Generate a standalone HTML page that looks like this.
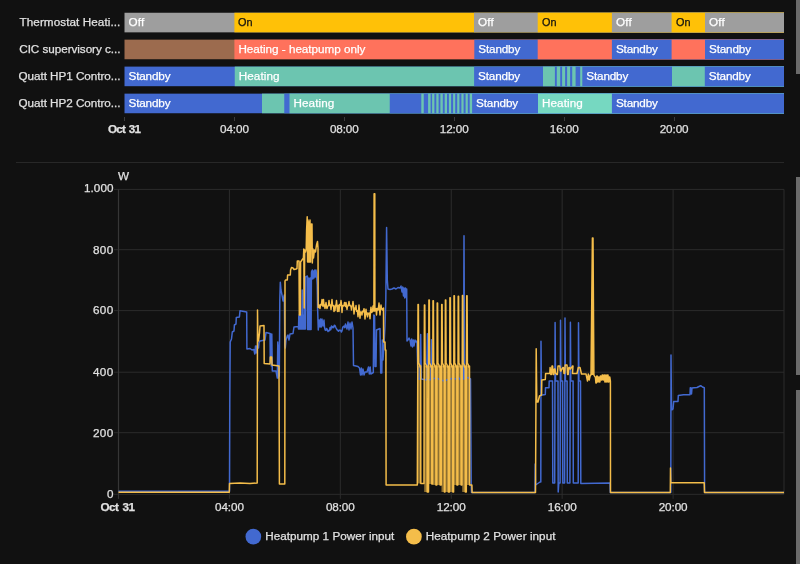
<!DOCTYPE html>
<html lang="en"><head><meta charset="utf-8"><title>History</title>
<style>
html,body{margin:0;padding:0;background:#111111;}
body{width:800px;height:564px;position:relative;overflow:hidden;font-family:"Liberation Sans",sans-serif;font-size:11.7px;color:#e1e1e1;-webkit-text-stroke:0.25px;}
#root{position:absolute;left:0;top:0;width:800px;height:564px;overflow:hidden;will-change:transform;-webkit-font-smoothing:antialiased;}
.abs{position:absolute;white-space:nowrap;}
.seg{position:absolute;overflow:hidden;white-space:nowrap;}
.sl{position:absolute;white-space:nowrap;line-height:20.6px;}
.name{position:absolute;right:679.6px;text-align:right;white-space:nowrap;}
.tl{position:absolute;white-space:nowrap;transform:translateX(-50%);line-height:14px;}
.yl{position:absolute;white-space:nowrap;right:686.4px;line-height:14px;}
.sb{position:absolute;left:796px;width:4px;background:#6b6b6b;}
svg{position:absolute;left:0;top:0;}
</style></head><body><div id="root">

<svg width="800" height="130" viewBox="0 0 800 130">
<rect x="124.50" y="12.75" width="659.50" height="19.60" fill="#9e9e9e"/>
<rect x="234.40" y="12.75" width="549.60" height="19.60" fill="#ffc107"/>
<rect x="474.00" y="12.75" width="310.00" height="19.60" fill="#9e9e9e"/>
<rect x="537.70" y="12.75" width="246.30" height="19.60" fill="#ffc107"/>
<rect x="611.90" y="12.75" width="172.10" height="19.60" fill="#9e9e9e"/>
<rect x="671.60" y="12.75" width="112.40" height="19.60" fill="#ffc107"/>
<rect x="705.00" y="12.75" width="79.00" height="19.60" fill="#9e9e9e"/>
<rect x="124.50" y="39.65" width="659.50" height="19.60" fill="#9c6b4e"/>
<rect x="234.40" y="39.65" width="549.60" height="19.60" fill="#ff725c"/>
<rect x="474.30" y="39.65" width="309.70" height="19.60" fill="#4269d0"/>
<rect x="537.70" y="39.65" width="246.30" height="19.60" fill="#ff725c"/>
<rect x="611.90" y="39.65" width="172.10" height="19.60" fill="#4269d0"/>
<rect x="671.60" y="39.65" width="112.40" height="19.60" fill="#ff725c"/>
<rect x="705.00" y="39.65" width="79.00" height="19.60" fill="#4269d0"/>
<rect x="124.50" y="66.60" width="659.50" height="19.60" fill="#4269d0"/>
<rect x="234.75" y="66.60" width="549.25" height="19.60" fill="#6cc5b0"/>
<rect x="474.10" y="66.60" width="309.90" height="19.60" fill="#4269d0"/>
<rect x="543.00" y="66.60" width="241.00" height="19.60" fill="#6cc5b0"/>
<rect x="554.90" y="66.60" width="229.10" height="19.60" fill="#4269d0"/>
<rect x="556.80" y="66.60" width="227.20" height="19.60" fill="#6cc5b0"/>
<rect x="560.20" y="66.60" width="223.80" height="19.60" fill="#4269d0"/>
<rect x="562.10" y="66.60" width="221.90" height="19.60" fill="#6cc5b0"/>
<rect x="565.10" y="66.60" width="218.90" height="19.60" fill="#4269d0"/>
<rect x="567.10" y="66.60" width="216.90" height="19.60" fill="#6cc5b0"/>
<rect x="570.10" y="66.60" width="213.90" height="19.60" fill="#4269d0"/>
<rect x="572.20" y="66.60" width="211.80" height="19.60" fill="#6cc5b0"/>
<rect x="575.60" y="66.60" width="208.40" height="19.60" fill="#4269d0"/>
<rect x="580.20" y="66.60" width="203.80" height="19.60" fill="#6cc5b0"/>
<rect x="582.30" y="66.60" width="201.70" height="19.60" fill="#4269d0"/>
<rect x="672.00" y="66.60" width="112.00" height="19.60" fill="#6cc5b0"/>
<rect x="704.80" y="66.60" width="79.20" height="19.60" fill="#4269d0"/>
<rect x="124.50" y="93.65" width="659.50" height="19.60" fill="#4269d0"/>
<rect x="262.00" y="93.65" width="522.00" height="19.60" fill="#6cc5b0"/>
<rect x="284.25" y="93.65" width="499.75" height="19.60" fill="#4269d0"/>
<rect x="289.50" y="93.65" width="494.50" height="19.60" fill="#6cc5b0"/>
<rect x="389.75" y="93.65" width="394.25" height="19.60" fill="#4269d0"/>
<rect x="421.30" y="93.65" width="362.70" height="19.60" fill="#6cc5b0"/>
<rect x="423.75" y="93.65" width="360.25" height="19.60" fill="#4269d0"/>
<rect x="428.10" y="93.65" width="355.90" height="19.60" fill="#6cc5b0"/>
<rect x="430.60" y="93.65" width="353.40" height="19.60" fill="#4269d0"/>
<rect x="432.10" y="93.65" width="351.90" height="19.60" fill="#6cc5b0"/>
<rect x="434.40" y="93.65" width="349.60" height="19.60" fill="#4269d0"/>
<rect x="436.30" y="93.65" width="347.70" height="19.60" fill="#6cc5b0"/>
<rect x="438.60" y="93.65" width="345.40" height="19.60" fill="#4269d0"/>
<rect x="440.40" y="93.65" width="343.60" height="19.60" fill="#6cc5b0"/>
<rect x="442.80" y="93.65" width="341.20" height="19.60" fill="#4269d0"/>
<rect x="444.70" y="93.65" width="339.30" height="19.60" fill="#6cc5b0"/>
<rect x="447.00" y="93.65" width="337.00" height="19.60" fill="#4269d0"/>
<rect x="448.90" y="93.65" width="335.10" height="19.60" fill="#6cc5b0"/>
<rect x="451.10" y="93.65" width="332.90" height="19.60" fill="#4269d0"/>
<rect x="453.10" y="93.65" width="330.90" height="19.60" fill="#6cc5b0"/>
<rect x="455.20" y="93.65" width="328.80" height="19.60" fill="#4269d0"/>
<rect x="457.20" y="93.65" width="326.80" height="19.60" fill="#6cc5b0"/>
<rect x="459.40" y="93.65" width="324.60" height="19.60" fill="#4269d0"/>
<rect x="461.40" y="93.65" width="322.60" height="19.60" fill="#6cc5b0"/>
<rect x="463.60" y="93.65" width="320.40" height="19.60" fill="#4269d0"/>
<rect x="465.60" y="93.65" width="318.40" height="19.60" fill="#6cc5b0"/>
<rect x="467.80" y="93.65" width="316.20" height="19.60" fill="#4269d0"/>
<rect x="469.70" y="93.65" width="314.30" height="19.60" fill="#6cc5b0"/>
<rect x="472.10" y="93.65" width="311.90" height="19.60" fill="#4269d0"/>
<rect x="538.00" y="93.65" width="246.00" height="19.60" fill="#76d8c1"/>
<rect x="611.90" y="93.65" width="172.10" height="19.60" fill="#4269d0"/>
</svg>
<div id="t0" class="name" style="letter-spacing:0.078px;top:11.8px;line-height:20.6px">Thermostat Heati...</div>
<span id="t1" class="sl" style="letter-spacing:0.213px;left:128.50px;top:11.85px;color:#ffffff;">Off</span>
<span class="sl" style="left:238.40px;top:11.85px;color:#111111;transform:scaleX(0.93);transform-origin:0 50%">On</span>
<span id="t2" class="sl" style="letter-spacing:0.213px;left:478.00px;top:11.85px;color:#ffffff;">Off</span>
<span class="sl" style="left:541.70px;top:11.85px;color:#111111;transform:scaleX(0.93);transform-origin:0 50%">On</span>
<span id="t3" class="sl" style="letter-spacing:0.213px;left:615.90px;top:11.85px;color:#ffffff;">Off</span>
<span class="sl" style="left:675.60px;top:11.85px;color:#111111;transform:scaleX(0.93);transform-origin:0 50%">On</span>
<span id="t4" class="sl" style="letter-spacing:0.213px;left:709.00px;top:11.85px;color:#ffffff;">Off</span>
<div id="t5" class="name" style="letter-spacing:-0.040px;top:38.6px;line-height:20.6px">CIC supervisory c...</div>
<span id="t6" class="sl" style="letter-spacing:-0.016px;left:238.40px;top:38.75px;color:#ffffff;">Heating - heatpump only</span>
<span id="t7" class="sl" style="letter-spacing:-0.148px;left:478.30px;top:38.75px;color:#ffffff;">Standby</span>
<span id="t8" class="sl" style="letter-spacing:-0.148px;left:615.90px;top:38.75px;color:#ffffff;">Standby</span>
<span id="t9" class="sl" style="letter-spacing:-0.148px;left:709.00px;top:38.75px;color:#ffffff;">Standby</span>
<div id="t10" class="name" style="letter-spacing:-0.036px;top:65.6px;line-height:20.6px">Quatt HP1 Contro...</div>
<span id="t11" class="sl" style="letter-spacing:-0.148px;left:128.50px;top:65.70px;color:#ffffff;">Standby</span>
<span id="t12" class="sl" style="letter-spacing:0.084px;left:238.75px;top:65.70px;color:#ffffff;">Heating</span>
<span id="t13" class="sl" style="letter-spacing:-0.148px;left:478.10px;top:65.70px;color:#ffffff;">Standby</span>
<span id="t14" class="sl" style="letter-spacing:-0.148px;left:586.30px;top:65.70px;color:#ffffff;">Standby</span>
<span id="t15" class="sl" style="letter-spacing:-0.148px;left:708.80px;top:65.70px;color:#ffffff;">Standby</span>
<div id="t16" class="name" style="letter-spacing:-0.036px;top:92.7px;line-height:20.6px">Quatt HP2 Contro...</div>
<span id="t17" class="sl" style="letter-spacing:-0.148px;left:128.50px;top:92.75px;color:#ffffff;">Standby</span>
<span id="t18" class="sl" style="letter-spacing:0.084px;left:293.50px;top:92.75px;color:#ffffff;">Heating</span>
<span id="t19" class="sl" style="letter-spacing:-0.148px;left:476.10px;top:92.75px;color:#ffffff;">Standby</span>
<span id="t20" class="sl" style="letter-spacing:0.084px;left:542.00px;top:92.75px;color:#ffffff;">Heating</span>
<span id="t21" class="sl" style="letter-spacing:-0.148px;left:615.90px;top:92.75px;color:#ffffff;">Standby</span>
<div class="abs" style="left:124.0px;top:117px;width:1px;height:4px;background:#3c3c3c"></div>
<div id="t22" class="tl" style="letter-spacing:-0.787px;left:124.0px;top:122.1px;font-weight:bold;word-spacing:1.2px;">Oct 31</div>
<div class="abs" style="left:233.9px;top:117px;width:1px;height:4px;background:#3c3c3c"></div>
<div id="t23" class="tl" style="letter-spacing:-0.088px;left:234.4px;top:122.1px;">04:00</div>
<div class="abs" style="left:343.8px;top:117px;width:1px;height:4px;background:#3c3c3c"></div>
<div id="t24" class="tl" style="letter-spacing:-0.088px;left:344.3px;top:122.1px;">08:00</div>
<div class="abs" style="left:453.8px;top:117px;width:1px;height:4px;background:#3c3c3c"></div>
<div id="t25" class="tl" style="letter-spacing:-0.088px;left:454.2px;top:122.1px;">12:00</div>
<div class="abs" style="left:563.7px;top:117px;width:1px;height:4px;background:#3c3c3c"></div>
<div id="t26" class="tl" style="letter-spacing:-0.088px;left:564.2px;top:122.1px;">16:00</div>
<div class="abs" style="left:673.6px;top:117px;width:1px;height:4px;background:#3c3c3c"></div>
<div id="t27" class="tl" style="letter-spacing:-0.088px;left:674.1px;top:122.1px;">20:00</div>
<div class="abs" style="left:16px;top:161.7px;width:768px;height:1.6px;background:#282828"></div>
<div class="sb" style="top:0.0px;height:74.0px"></div>
<div class="sb" style="top:177.0px;height:197.5px"></div>
<div class="sb" style="top:389.6px;height:174.4px"></div>
<svg width="800" height="564" viewBox="0 0 800 564">
<line x1="114.0" y1="494.30" x2="784.0" y2="494.30" stroke="#2c2c2c" stroke-width="1"/>
<line x1="114.0" y1="432.70" x2="784.0" y2="432.70" stroke="#2c2c2c" stroke-width="1"/>
<line x1="114.0" y1="372.20" x2="784.0" y2="372.20" stroke="#2c2c2c" stroke-width="1"/>
<line x1="114.0" y1="310.60" x2="784.0" y2="310.60" stroke="#2c2c2c" stroke-width="1"/>
<line x1="114.0" y1="249.70" x2="784.0" y2="249.70" stroke="#2c2c2c" stroke-width="1"/>
<line x1="114.0" y1="189.40" x2="784.0" y2="189.40" stroke="#2c2c2c" stroke-width="1"/>
<line x1="118.50" y1="189.40" x2="118.50" y2="498.80" stroke="#2c2c2c" stroke-width="1"/>
<line x1="229.42" y1="189.40" x2="229.42" y2="498.80" stroke="#2c2c2c" stroke-width="1"/>
<line x1="340.33" y1="189.40" x2="340.33" y2="498.80" stroke="#2c2c2c" stroke-width="1"/>
<line x1="451.25" y1="189.40" x2="451.25" y2="498.80" stroke="#2c2c2c" stroke-width="1"/>
<line x1="562.17" y1="189.40" x2="562.17" y2="498.80" stroke="#2c2c2c" stroke-width="1"/>
<line x1="673.08" y1="189.40" x2="673.08" y2="498.80" stroke="#2c2c2c" stroke-width="1"/>
<line x1="784.00" y1="189.40" x2="784.00" y2="494.30" stroke="#2c2c2c" stroke-width="1"/>
<line x1="118.50" y1="189.40" x2="118.50" y2="498.80" stroke="#363636" stroke-width="1.2"/>
<rect x="417.8" y="366.0" width="3.0" height="117.5" fill="#f4bd4a" opacity="0.55"/>
<rect x="424.2" y="366.0" width="3.0" height="126.0" fill="#f4bd4a" opacity="0.55"/>
<rect x="428.7" y="366.0" width="3.1" height="118.0" fill="#f4bd4a" opacity="0.55"/>
<rect x="432.8" y="366.0" width="3.1" height="119.0" fill="#f4bd4a" opacity="0.55"/>
<rect x="437.0" y="366.0" width="3.1" height="119.0" fill="#f4bd4a" opacity="0.55"/>
<rect x="441.5" y="366.0" width="2.9" height="126.0" fill="#f4bd4a" opacity="0.55"/>
<rect x="445.2" y="366.0" width="3.1" height="126.0" fill="#f4bd4a" opacity="0.55"/>
<rect x="449.7" y="366.0" width="3.1" height="126.0" fill="#f4bd4a" opacity="0.55"/>
<rect x="453.8" y="366.0" width="3.1" height="119.0" fill="#f4bd4a" opacity="0.55"/>
<rect x="458.0" y="366.0" width="3.1" height="119.0" fill="#f4bd4a" opacity="0.55"/>
<rect x="462.2" y="366.0" width="3.1" height="126.0" fill="#f4bd4a" opacity="0.55"/>
<rect x="466.5" y="366.0" width="3.1" height="119.0" fill="#f4bd4a" opacity="0.55"/>
<polyline points="118.5,491.2 229.5,491.2 229.8,400.0 230.2,342.0 231.5,339.0 232.3,332.0 234.0,331.0 234.4,325.0 236.0,324.0 236.3,317.5 239.4,317.0 240.0,310.8 246.7,311.9 246.9,349.0 250.0,348.5 252.0,350.0 253.8,349.4 254.8,354.0 255.5,346.0 256.2,353.0 256.8,346.0 258.5,348.0 259.0,342.5 260.0,341.0 265.0,340.0 266.0,332.5 270.0,333.5 270.3,362.0 270.8,334.0 271.3,366.0 271.8,334.0 272.3,371.0 276.0,371.0 277.3,378.0 277.8,342.0 278.3,378.0 278.8,345.0 279.3,376.0 279.8,300.0 280.3,282.2 281.0,290.0 282.0,295.0 283.0,301.0 284.3,295.0 284.8,346.0 285.3,348.0 286.0,340.0 287.5,335.5 288.0,335.0 289.0,340.0 290.0,334.0 293.0,333.5 294.0,327.0 298.3,326.5 298.5,329.0 298.8,316.0 299.0,329.0 299.2,315.0 299.5,329.0 299.8,316.0 300.0,329.0 300.2,278.0 300.5,329.0 300.8,315.0 301.0,329.0 301.2,317.0 301.5,329.0 301.8,315.0 302.0,329.0 302.2,290.0 302.5,329.0 302.8,315.0 303.0,329.0 303.2,317.0 303.5,329.0 303.8,315.0 304.0,329.0 304.2,278.0 304.5,329.0 304.8,316.0 305.0,329.0 305.2,316.0 305.4,329.0 305.6,277.0 307.4,276.0 307.6,329.5 307.9,278.0 308.1,329.5 308.4,288.0 308.6,329.5 308.9,278.0 309.1,329.5 309.4,300.0 309.6,329.5 309.9,296.0 310.1,329.5 310.4,278.0 310.6,329.5 310.9,300.0 311.1,329.5 311.4,278.0 311.5,272.0 312.3,270.0 312.8,279.0 313.5,271.0 314.0,278.0 314.8,270.0 315.4,277.0 316.0,270.0 316.6,274.0 317.2,285.0 317.6,308.0 318.3,330.0 319.0,320.0 320.0,327.0 320.5,319.0 321.3,327.0 322.0,319.0 323.0,326.0 324.0,320.0 324.5,327.2 325.2,330.0 325.9,330.4 326.6,328.5 327.3,329.6 328.0,331.5 328.7,330.5 329.4,330.8 330.1,327.4 330.8,329.7 331.5,326.0 332.2,327.7 332.9,326.6 333.6,327.7 334.3,325.3 335.0,325.4 335.7,327.2 336.4,328.7 337.1,329.9 337.8,330.4 338.5,331.2 339.2,330.1 339.9,330.6 340.6,330.3 341.3,332.0 342.0,330.8 342.7,327.5 343.4,326.4 344.1,326.1 344.8,327.7 345.5,324.0 347.0,329.0 348.0,322.0 349.0,330.0 350.0,323.0 351.0,329.0 352.0,322.0 353.0,328.0 353.5,365.5 356.0,366.0 358.0,366.5 359.5,368.0 360.5,375.0 361.3,368.0 362.0,375.0 363.0,369.0 364.0,375.0 365.0,372.0 367.0,372.0 368.5,367.0 369.3,374.0 370.2,367.0 370.8,374.0 373.3,372.5 373.8,315.0 374.6,316.0 375.0,366.5 376.0,366.5 376.5,330.0 380.0,328.5 380.7,373.0 381.8,373.0 382.3,340.0 383.0,360.0 384.0,345.0 385.0,326.0 385.8,300.0 386.6,227.6 387.3,280.0 388.0,289.0 390.0,289.4 392.0,289.0 394.0,288.0 396.0,289.0 398.0,287.5 400.0,288.0 401.0,286.0 402.0,292.0 402.7,287.0 403.5,296.0 404.0,288.0 404.8,298.0 405.5,288.0 406.0,297.0 406.7,289.0 407.0,341.0 408.0,340.0 409.0,338.0 410.0,340.0 411.0,346.0 411.7,339.0 412.5,347.0 413.3,340.0 414.0,346.0 415.0,340.0 416.0,342.0 417.0,341.0 418.0,379.0 420.0,379.0 420.7,334.5 421.3,379.0 426.7,380.0 427.4,333.7 428.0,380.0 431.0,379.5 431.5,339.7 432.0,379.0 436.0,378.0 440.0,379.5 444.0,381.0 448.0,379.5 452.0,378.5 456.0,379.0 458.0,377.0 460.0,379.5 462.0,378.0 463.5,379.0 464.0,235.7 464.6,379.0 466.0,378.0 468.0,377.5 470.5,379.0 471.2,483.0 471.5,492.5 535.0,492.5 535.2,464.0 535.6,485.0 540.0,482.0 540.8,482.0 541.0,341.2 541.5,395.0 542.5,395.0 545.3,394.5 545.5,387.7 549.0,387.7 549.2,381.0 552.5,381.0 552.8,483.0 554.7,483.0 555.1,322.5 555.5,381.0 558.0,381.0 558.2,492.0 558.8,483.0 560.1,483.0 560.5,320.2 560.9,381.0 562.6,381.0 562.8,483.0 564.6,483.0 565.0,318.0 565.4,381.0 567.1,381.0 567.3,483.0 569.9,483.0 570.4,322.2 570.8,381.0 573.1,381.0 573.3,483.0 578.2,483.0 578.5,322.8 578.9,381.0 580.5,381.0 580.8,483.5 610.0,483.0 610.3,492.5 670.8,492.5 671.0,355.0 671.5,409.7 672.2,409.7 673.0,409.0 673.7,401.5 678.0,401.5 678.3,395.5 683.5,394.7 690.0,394.7 690.3,387.7 691.0,388.0 691.5,394.0 692.0,388.0 694.0,387.7 697.0,387.5 699.0,386.5 700.7,385.7 702.5,387.0 704.3,387.7 704.6,492.5 784.0,492.5" fill="none" stroke="#4269d0" stroke-width="1.5" stroke-linejoin="round"/>
<polygon points="591.0,375.0 592.4,238.0 593.0,238.0 593.9,375.0" fill="#f4bd4a"/>
<polyline points="118.5,492.3 229.3,492.3 229.5,483.5 240.0,483.0 250.0,483.6 257.2,483.0 257.5,310.0 257.9,341.0 258.5,341.0 259.5,333.0 260.0,326.0 264.0,325.5 264.2,363.5 270.0,364.0 270.3,357.0 271.7,357.0 272.0,365.0 279.0,366.0 279.4,484.0 284.8,484.0 285.0,281.0 285.5,280.0 287.3,280.0 287.6,275.0 290.3,275.0 290.6,270.0 291.5,267.5 293.0,268.0 294.0,269.5 296.0,269.0 297.0,268.5 297.3,261.0 299.0,261.0 299.3,315.0 300.3,315.0 300.6,262.0 303.4,258.0 303.8,249.0 304.2,308.0 304.7,250.0 305.5,252.0 306.2,249.0 306.6,230.0 307.2,216.8 307.6,262.0 308.0,220.0 308.5,262.0 309.0,222.0 309.5,262.0 310.0,220.0 310.5,262.0 311.0,226.0 311.4,224.0 312.0,224.0 312.3,263.0 313.0,249.0 313.5,258.0 314.5,250.0 315.5,252.0 316.5,245.0 317.5,241.5 318.0,248.0 318.2,307.5 319.0,305.0 319.5,306.5 320.0,308.5 320.5,304.5 321.0,305.0 321.5,304.5 322.0,299.5 322.5,306.0 323.0,305.0 323.5,299.5 324.0,306.5 324.5,305.0 325.0,308.5 325.5,305.5 326.0,302.5 326.5,306.5 327.0,308.5 327.5,306.5 328.0,306.0 328.5,305.5 329.0,300.5 329.5,305.5 330.0,305.5 330.5,305.0 331.0,309.5 331.5,304.5 332.0,299.5 332.5,305.5 333.0,306.0 333.5,305.5 334.0,311.5 334.5,306.5 335.0,310.5 335.5,305.0 336.0,306.0 336.5,300.5 337.0,306.5 337.5,311.5 338.0,305.5 338.5,305.5 339.0,311.5 339.5,304.5 340.0,304.5 340.5,305.5 341.0,300.5 341.5,304.5 342.0,312.5 342.5,306.0 343.0,305.5 343.5,306.0 344.0,305.5 344.5,302.5 345.0,305.0 345.5,306.5 346.0,302.5 346.5,305.5 347.0,309.5 347.5,306.0 348.0,306.0 348.5,304.5 349.0,301.5 349.5,305.5 350.0,305.0 350.5,306.0 351.0,306.5 351.5,310.0 352.0,306.0 352.5,305.0 353.0,301.5 353.5,305.8 354.0,314.0 354.5,308.8 355.0,308.0 355.5,309.2 356.0,305.5 356.5,311.2 357.0,310.3 357.5,311.5 358.0,316.7 358.5,311.8 359.0,305.0 359.5,311.7 360.0,318.3 360.5,312.0 361.0,312.2 361.5,312.3 362.0,315.0 362.5,311.2 363.0,311.8 363.5,311.5 364.0,308.7 364.5,312.8 365.0,319.0 365.5,314.2 366.0,309.3 366.5,314.5 367.0,312.7 367.5,316.8 368.0,314.5 368.5,313.2 369.0,313.4 369.5,313.1 370.0,318.8 370.5,311.5 371.0,307.2 371.5,312.4 372.0,312.1 372.5,311.3 373.0,306.0 373.5,309.0 373.9,311.0 374.1,193.8 374.8,193.8 374.9,311.0 375.5,309.5 376.0,308.5 376.5,315.0 377.0,309.0 377.5,308.5 378.0,310.0 378.5,308.0 379.0,303.0 379.5,309.0 380.0,315.0 380.5,309.0 381.0,305.0 381.5,309.0 382.0,308.5 382.5,310.0 383.0,308.5 383.5,308.0 383.6,342.0 385.0,342.0 385.2,350.0 385.9,350.0 386.1,485.0 417.3,485.0 417.8,364.0 418.0,304.5 418.4,304.5 418.7,363.0 419.5,364.5 420.1,367.0 420.7,366.0 420.8,483.5 424.0,483.5 424.2,364.0 424.4,305.0 424.8,305.0 425.1,363.0 425.9,364.5 426.5,367.0 427.1,366.0 427.2,492.0 428.5,492.0 428.7,364.0 428.9,300.0 429.3,300.0 429.6,363.0 430.4,364.5 431.0,367.0 431.7,366.0 431.8,484.0 432.6,484.0 432.8,364.0 433.0,300.7 433.4,300.7 433.7,363.0 434.5,364.5 435.1,367.0 435.8,366.0 435.9,485.0 436.8,485.0 437.0,364.0 437.2,303.0 437.6,303.0 437.9,363.0 438.7,364.5 439.3,367.0 440.0,366.0 440.1,485.0 441.3,485.0 441.5,364.0 441.7,304.5 442.1,304.5 442.4,363.0 443.2,364.5 443.8,367.0 444.3,366.0 444.4,492.0 445.0,492.0 445.2,364.0 445.4,300.0 445.8,300.0 446.1,363.0 446.9,364.5 447.5,367.0 448.2,366.0 448.3,492.0 449.5,492.0 449.7,364.0 449.9,297.7 450.3,297.7 450.6,363.0 451.4,364.5 452.0,367.0 452.7,366.0 452.8,492.0 453.6,492.0 453.8,364.0 454.0,295.8 454.4,295.8 454.7,363.0 455.5,364.5 456.1,367.0 456.8,366.0 456.9,485.0 457.8,485.0 458.0,364.0 458.2,296.2 458.6,296.2 458.9,363.0 459.7,364.5 460.3,367.0 461.0,366.0 461.1,485.0 462.0,485.0 462.2,364.0 462.4,295.5 462.8,295.5 463.1,363.0 463.9,364.5 464.5,367.0 465.2,366.0 465.3,492.0 466.3,492.0 466.5,364.0 466.7,295.8 467.1,295.8 467.4,363.0 468.2,364.5 468.8,367.0 469.5,366.0 469.6,485.0 471.9,485.0 472.1,492.5 535.5,492.4 536.2,348.7 536.8,402.0 538.0,402.0 539.5,396.0 541.5,395.0 541.8,380.0 545.3,379.5 545.6,373.5 549.8,373.5 550.1,367.5 550.8,374.5 551.4,374.5 552.0,366.0 552.6,366.0 553.2,374.5 553.8,374.5 554.4,369.0 555.0,369.0 555.6,373.5 556.2,373.5 556.8,374.5 557.4,374.5 558.0,366.0 558.6,366.0 559.2,366.0 559.8,366.0 560.4,371.0 561.0,371.0 561.6,369.0 562.2,369.0 562.8,367.5 563.4,367.5 564.0,373.5 564.6,373.5 565.2,365.0 565.8,365.0 566.4,365.0 567.0,365.0 567.6,374.5 568.2,374.5 568.8,367.5 569.4,367.5 570.0,369.0 570.6,369.0 571.2,367.5 571.8,367.5 572.4,366.0 573.0,366.0 572.5,373.5 577.0,373.5 578.3,367.5 580.0,367.5 581.5,374.0 586.0,374.0 587.5,381.0 588.3,374.0 589.2,380.0 590.3,375.0 591.0,375.0 592.4,238.0 593.0,238.0 593.9,375.0 595.0,377.0 595.4,377.0 595.9,383.0 596.3,383.0 596.8,376.0 597.2,376.0 597.7,382.0 598.1,382.0 598.6,377.0 599.0,377.0 599.5,382.0 599.9,382.0 600.4,376.0 600.8,376.0 601.3,380.0 601.7,380.0 602.2,375.0 602.6,375.0 603.1,380.0 603.5,380.0 604.0,375.0 604.4,375.0 604.9,382.0 605.3,382.0 605.8,375.0 606.2,375.0 606.7,382.0 607.1,382.0 607.6,375.0 608.0,375.0 608.5,382.0 608.9,382.0 609.4,377.0 609.8,377.0 610.4,381.0 610.5,492.4 670.3,492.4 670.5,468.0 670.8,482.7 704.2,482.7 704.5,492.4 784.0,492.4" fill="none" stroke="#f4bd4a" stroke-width="1.5" stroke-linejoin="round"/>
<circle cx="253.35" cy="536.65" r="7.85" fill="#4269d0"/>
<circle cx="413.9" cy="536.65" r="7.85" fill="#f4bd4a"/>
</svg>
<div id="t28" class="yl" style="letter-spacing:0.000px;top:487.1px">0</div>
<div id="t29" class="yl" style="letter-spacing:0.392px;top:425.5px">200</div>
<div id="t30" class="yl" style="letter-spacing:0.392px;top:365.0px">400</div>
<div id="t31" class="yl" style="letter-spacing:0.392px;top:303.4px">600</div>
<div id="t32" class="yl" style="letter-spacing:0.392px;top:242.5px">800</div>
<div id="t33" class="yl" style="letter-spacing:0.088px;top:181.2px">1.000</div>
<div id="t34" class="abs" style="letter-spacing:0.000px;left:118.0px;top:169.2px;line-height:14px">W</div>
<div id="t35" class="tl" style="letter-spacing:-0.467px;left:117.5px;top:499.7px;font-weight:bold;word-spacing:1.2px;">Oct 31</div>
<div id="t36" class="tl" style="letter-spacing:-0.088px;left:229.4px;top:499.7px;">04:00</div>
<div id="t37" class="tl" style="letter-spacing:-0.088px;left:340.3px;top:499.7px;">08:00</div>
<div id="t38" class="tl" style="letter-spacing:-0.088px;left:451.2px;top:499.7px;">12:00</div>
<div id="t39" class="tl" style="letter-spacing:-0.088px;left:562.2px;top:499.7px;">16:00</div>
<div id="t40" class="tl" style="letter-spacing:-0.088px;left:673.1px;top:499.7px;">20:00</div>
<div id="t41" class="abs" style="letter-spacing:0.017px;left:265.3px;top:529px;line-height:14px">Heatpump 1 Power input</div>
<div id="t42" class="abs" style="letter-spacing:0.055px;left:425.7px;top:529px;line-height:14px">Heatpump 2 Power input</div>
</div></body></html>
